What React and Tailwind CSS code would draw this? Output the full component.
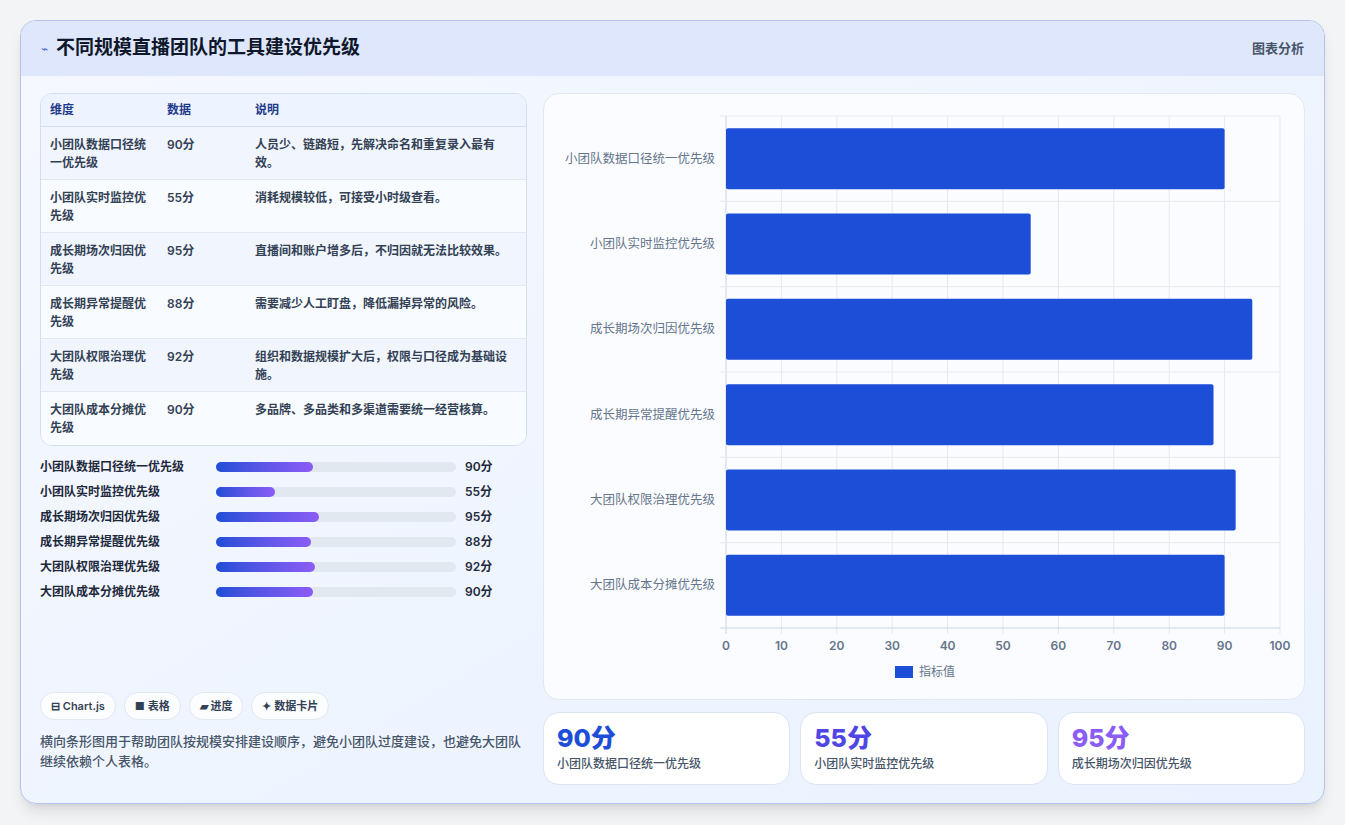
const rows = [
  ["小团队数据口径统一优先级", 90, "人员少、链路短，先解决命名和重复录入最有效。"],
  ["小团队实时监控优先级", 55, "消耗规模较低，可接受小时级查看。"],
  ["成长期场次归因优先级", 95, "直播间和账户增多后，不归因就无法比较效果。"],
  ["成长期异常提醒优先级", 88, "需要减少人工盯盘，降低漏掉异常的风险。"],
  ["大团队权限治理优先级", 92, "组织和数据规模扩大后，权限与口径成为基础设施。"],
  ["大团队成本分摊优先级", 90, "多品牌、多品类和多渠道需要统一经营核算。"],
];

const Chart = () => {
  const x0 = 182, x1 = 736, top = 22, bottom = 534;
  const band = (bottom - top) / 6;
  const sx = (v) => x0 + ((x1 - x0) * v) / 100;
  return (
    <svg width="762" height="607" className="block">
      {[0, 10, 20, 30, 40, 50, 60, 70, 80, 90, 100].map((t) => (
        <g key={t}>
          <line x1={sx(t)} x2={sx(t)} y1={top} y2={bottom + 6} stroke={t === 0 ? "#cbd5e1" : "#e5e9f0"} />
          <text x={sx(t)} y={556} textAnchor="middle" fontSize="12" fontWeight="600" fill="#64748b">{t}</text>
        </g>
      ))}
      {[0, 1, 2, 3, 4, 5, 6].map((i) => (
        <line key={i} x1={x0 - 6} x2={x1} y1={top + band * i} y2={top + band * i} stroke={i === 6 ? "#cbd5e1" : "#e5e9f0"} />
      ))}
      {rows.map((r, i) => {
        const cy = top + band * i + band / 2;
        return (
          <g key={i}>
            <text x={171} y={cy + 4} textAnchor="end" fontSize="12.5" fill="#64748b">{r[0]}</text>
            <rect x={x0} y={cy - 30.5} width={sx(r[1]) - x0} height={61} rx="2" fill="#1d4ed8" />
          </g>
        );
      })}
      <rect x={351} y={572} width={18} height={12} fill="#1d4ed8" />
      <text x={375} y={582} fontSize="12" fill="#64748b">指标值</text>
    </svg>
  );
};

export default function App() {
  return (
    <div className="w-[1345px] h-[825px] bg-[#f3f4f6] p-5" style={{ fontFamily: "Inter, 'Noto Sans CJK SC', sans-serif" }}>
      <div className="w-[1305px] h-[784px] rounded-2xl border border-[#b4c2ec] overflow-hidden bg-gradient-to-br from-[#f5f8ff] to-[#eaf2ff] shadow-lg flex flex-col">
        <div className="h-[55px] bg-[#dfe7fd] flex items-center justify-between px-5 shrink-0">
          <div className="flex items-center gap-2">
            <span className="text-[#4f6fd8] text-xs">⌁</span>
            <h1 className="text-[19px] font-bold text-[#0f172a]">不同规模直播团队的工具建设优先级</h1>
          </div>
          <span className="text-[13px] font-semibold text-[#475569]">图表分析</span>
        </div>
        <div className="flex gap-4 px-[19px] pt-[17px]">
          <div className="w-[488px] h-[692px] flex flex-col">
            <div className="rounded-xl border border-[#d5deee] overflow-hidden bg-white/70">
              <div className="grid grid-cols-[117px_88px_1fr] h-[33px] items-center px-[9px] bg-[#eef4ff] border-b border-[#d5deee] text-xs font-semibold text-[#1e3a8a]">
                <div>维度</div><div>数据</div><div>说明</div>
              </div>
              {rows.map((r, i) => (
                <div key={i} className={`grid grid-cols-[117px_88px_1fr] h-[53px] px-[9px] pt-[9px] text-xs font-semibold text-[#334155] leading-[18px] ${i < 5 ? "border-b border-[#e2e8f0]" : ""} ${i % 2 ? "bg-[#f8fbff]" : "bg-[#f1f6fe]"}`}>
                  <div className="pr-3">{r[0]}</div><div>{r[1]}分</div><div>{r[2]}</div>
                </div>
              ))}
            </div>
            <div className="flex flex-col gap-[7px] mt-3">
              {rows.map((r, i) => (
                <div key={i} className="flex items-center h-[18px] text-xs font-semibold text-[#1e293b]">
                  <div className="w-[176px]">{r[0]}</div>
                  <div className="w-[240px] h-[10px] rounded-full bg-[#e2e8f0]">
                    <div className="h-full rounded-full bg-gradient-to-r from-[#1d4ed8] to-[#8b5cf6]" style={{ width: `${r[1] * 0.45}%` }} />
                  </div>
                  <div className="ml-[9px]">{r[1]}分</div>
                </div>
              ))}
            </div>
            <div className="mt-auto mb-[14px]">
              <div className="flex gap-2 text-[11px] font-semibold text-[#334155]">
                {["⊟ Chart.js", "■ 表格", "▰ 进度", "✦ 数据卡片"].map((t) => (
                  <span key={t} className="h-7 px-[10px] flex items-center rounded-full bg-white/80 border border-[#e2e8f0]">{t}</span>
                ))}
              </div>
              <p className="mt-[11px] text-[13px] leading-5 font-medium text-[#475569]">横向条形图用于帮助团队按规模安排建设顺序，避免小团队过度建设，也避免大团队继续依赖个人表格。</p>
            </div>
          </div>
          <div className="w-[762px] flex flex-col gap-3">
            <div className="h-[607px] rounded-2xl border border-[#e2e8f0] bg-[#fbfcff] overflow-hidden"><Chart /></div>
            <div className="grid grid-cols-3 gap-[10px]">
              {[["90分", "text-[#1d4ed8]", 0], ["55分", "text-[#4f46e5]", 1], ["95分", "text-[#8b5cf6]", 2]].map(([v, c, i]) => (
                <div key={i} className="h-[73px] rounded-2xl border border-[#dbe4f3] bg-white px-[13px] pt-[9px]">
                  <div className={`text-[25px] font-extrabold leading-8 ${c}`}>{v}</div>
                  <div className="text-xs font-medium text-[#475569] mt-[2px]">{rows[i][0]}</div>
                </div>
              ))}
            </div>
          </div>
        </div>
      </div>
    </div>
  );
}
